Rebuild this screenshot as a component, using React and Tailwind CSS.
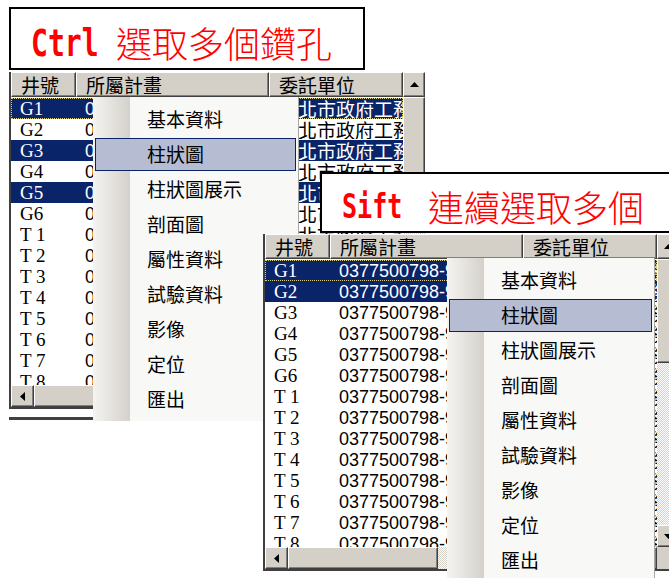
const rows = ["G1", "G2", "G3", "G4", "G5", "G6", "T 1", "T 2", "T 3", "T 4", "T 5", "T 6", "T 7", "T 8"];
const menuItems = ["基本資料", "柱狀圖", "柱狀圖展示", "剖面圖", "屬性資料", "試驗資料", "影像", "定位", "匯出"];

const cjk = "font-['Noto_Sans_CJK_TC',sans-serif]";
const raised =
  "bg-[#d4d0c8] border border-t-white border-l-white border-r-[#404040] border-b-[#404040] shadow-[inset_-1px_-1px_0_#808080]";
const checker =
  "bg-[repeating-conic-gradient(#d4d0c8_0_25%,#ffffff_0_50%)] bg-[length:2px_2px]";

function Arrow({ dir }) {
  const d = {
    up: "M0 5 L4.5 0 L9 5Z",
    down: "M0 0 L4.5 5 L9 0Z",
    left: "M5 0 L0 4.5 L5 9Z",
    right: "M0 0 L5 4.5 L0 9Z",
  }[dir];
  const vertical = dir === "up" || dir === "down";
  return (
    <svg width={vertical ? 9 : 5} height={vertical ? 5 : 9} viewBox={vertical ? "0 0 9 5" : "0 0 5 9"}>
      <path d={d} fill="#000" />
    </svg>
  );
}

function HeaderCell({ width, children }) {
  return (
    <div className={`${width} ${raised} flex items-center pl-[9px] text-[19px] text-black ${cjk} leading-none overflow-hidden whitespace-nowrap`}>
      {children}
    </div>
  );
}

function ContextMenu({ className }) {
  return (
    <div
      className={`absolute w-[206px] h-[324px] pt-[5px] border-r border-[#a8a6a0] bg-[linear-gradient(to_right,#f5f4f1_0px,#d4d1ca_37px,#f8f8f6_37px)] ${className}`}
    >
      {menuItems.map((item, i) => (
        <div key={item} className="h-[35px] py-px px-[2px]">
          <div
            className={`h-[33px] flex items-center pl-[51px] pb-[3px] text-[19px] text-black ${cjk} leading-none border ${
              i === 1 ? "bg-[#b6bdd2] border-[#0a246a]" : "border-transparent"
            }`}
          >
            {item}
          </div>
        </div>
      ))}
    </div>
  );
}

function ListWindow({ className, selected, menuClass }) {
  return (
    <div className={`absolute w-[416px] ${className}`}>
      <div className="border-l-2 border-b-2 border-[#404040] bg-white flex flex-col">
        <div className="flex h-[25px]">
          <HeaderCell width="w-[65px]">井號</HeaderCell>
          <HeaderCell width="w-[193px]">所屬計畫</HeaderCell>
          <HeaderCell width="w-[134px]">委託單位</HeaderCell>
          <div className={`w-[22px] ${raised} flex items-center justify-center`}>
            <Arrow dir="up" />
          </div>
        </div>
        <div className="flex h-[288px]">
          <div className="w-[392px] overflow-hidden pt-px">
            {rows.map((r, i) => {
              const sel = selected.includes(i);
              return (
                <div
                  key={r}
                  className={`h-[21px] flex items-center whitespace-nowrap ${
                    sel ? "bg-[#0a246a] text-white" : "bg-white text-black"
                  } ${i === 0 ? "outline-1 outline-dotted outline-[#d8cf8a] -outline-offset-1" : ""}`}
                >
                  <div className="w-[65px] pl-[9px] overflow-hidden font-['Liberation_Serif',serif] text-[19px] leading-none">
                    {r}
                  </div>
                  <div className="w-[193px] pl-[9px] overflow-hidden font-['Liberation_Sans',sans-serif] text-[18px] leading-none">
                    0377500798-9601
                  </div>
                  <div className={`w-[134px] pl-[10px] overflow-hidden ${cjk} text-[19px] leading-none`}>
                    臺北市政府工務局
                  </div>
                </div>
              );
            })}
          </div>
          <div className="w-[22px] flex flex-col">
            <div className={`h-[104px] ${raised}`} />
            <div className={`flex-1 ${checker}`} />
            <div className={`h-[22px] ${raised} flex items-center justify-center`}>
              <Arrow dir="down" />
            </div>
          </div>
        </div>
        <div className="flex h-[22px]">
          <div className={`w-[23px] ${raised} flex items-center justify-center`}>
            <Arrow dir="left" />
          </div>
          <div className={`w-[150px] ${raised}`} />
          <div className={`flex-1 ${checker}`} />
          <div className={`w-[22px] ${raised} flex items-center justify-center`}>
            <Arrow dir="right" />
          </div>
          <div className="w-[22px] bg-[#d4d0c8]" />
        </div>
      </div>
      <div className="mt-[8px] h-[3px] bg-[#404040]" />
      <ContextMenu className={menuClass} />
    </div>
  );
}

function Label({ className, latin, latinClass, text }) {
  return (
    <div className={`absolute bg-white border-2 border-black flex items-center pl-[20px] pt-[7px] whitespace-nowrap text-[#ff0000] ${className}`}>
      <span className={`inline-block ${latinClass}`}>
        <span className="inline-block origin-left font-['DejaVu_Sans_Mono',monospace] font-bold leading-none scale-x-[0.76]">
          {latin}
        </span>
      </span>
      <span className={`${cjk} font-light text-[36px] leading-none`}>{text}</span>
    </div>
  );
}

export default function App() {
  return (
    <div className="relative w-[669px] h-[578px] overflow-hidden bg-white">
      <Label
        className="left-[9px] top-[7px] w-[356px] h-[63px]"
        latin="Ctrl"
        latinClass="w-[85px] text-[37px]"
        text="選取多個鑽孔"
      />
      <ListWindow className="left-[9px] top-[72px]" selected={[0, 2, 4]} menuClass="left-[84px] top-[25px]" />
      <Label
        className="left-[320px] top-[172px] w-[360px] h-[61px]"
        latin="Sift"
        latinClass="w-[86px] text-[33px]"
        text="連續選取多個"
      />
      <ListWindow className="left-[263px] top-[234px]" selected={[0, 1]} menuClass="left-[184px] top-[24px] w-[208px]" />
    </div>
  );
}
